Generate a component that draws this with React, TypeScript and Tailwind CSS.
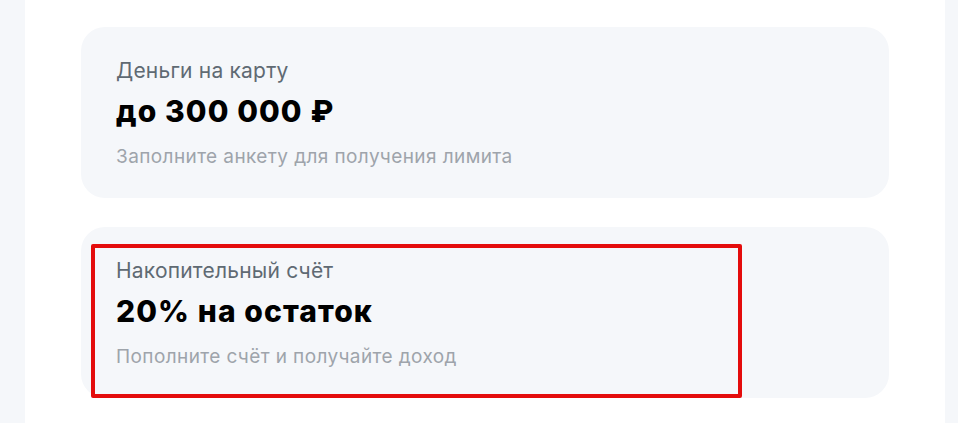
export default function App() {
  const cards = [
    {
      title: "Деньги на карту",
      value: "до 300 000 ₽",
      hint: "Заполните анкету для получения лимита",
    },
    {
      title: "Накопительный счёт",
      value: "20% на остаток",
      hint: "Пополните счёт и получайте доход",
    },
  ];

  return (
    <div
      className="flex h-[423px] w-[958px] overflow-hidden bg-[#f5f7fa]"
      style={{ fontFamily: "Inter, 'Noto Sans', sans-serif" }}
    >
      <div className="relative ml-[25px] flex w-[920px] flex-col gap-[29px] bg-white pl-[56px] pt-[27px]">
        {cards.map((c) => (
          <div
            key={c.title}
            className="flex h-[171px] w-[808px] flex-col rounded-[24px] bg-[#f5f7fa] pl-[35px] pt-[30px]"
          >
            <div className="text-[21px] leading-[28px] tracking-[0.2px] text-[#5f6a73]">
              {c.title}
            </div>
            <div className="mt-[8px] text-[30px] font-extrabold leading-[36px] tracking-[1.1px] text-black">
              {c.value}
            </div>
            <div className="mt-[16px] text-[19px] leading-[24px] tracking-[0.4px] text-[#9ea4ab]">
              {c.hint}
            </div>
          </div>
        ))}

        {/* red annotation frame */}
        <div className="absolute left-[66px] top-[244px] h-[154px] w-[651px] rounded-[2px] border-[4px] border-[#e40c0c]" />
      </div>
    </div>
  );
}
